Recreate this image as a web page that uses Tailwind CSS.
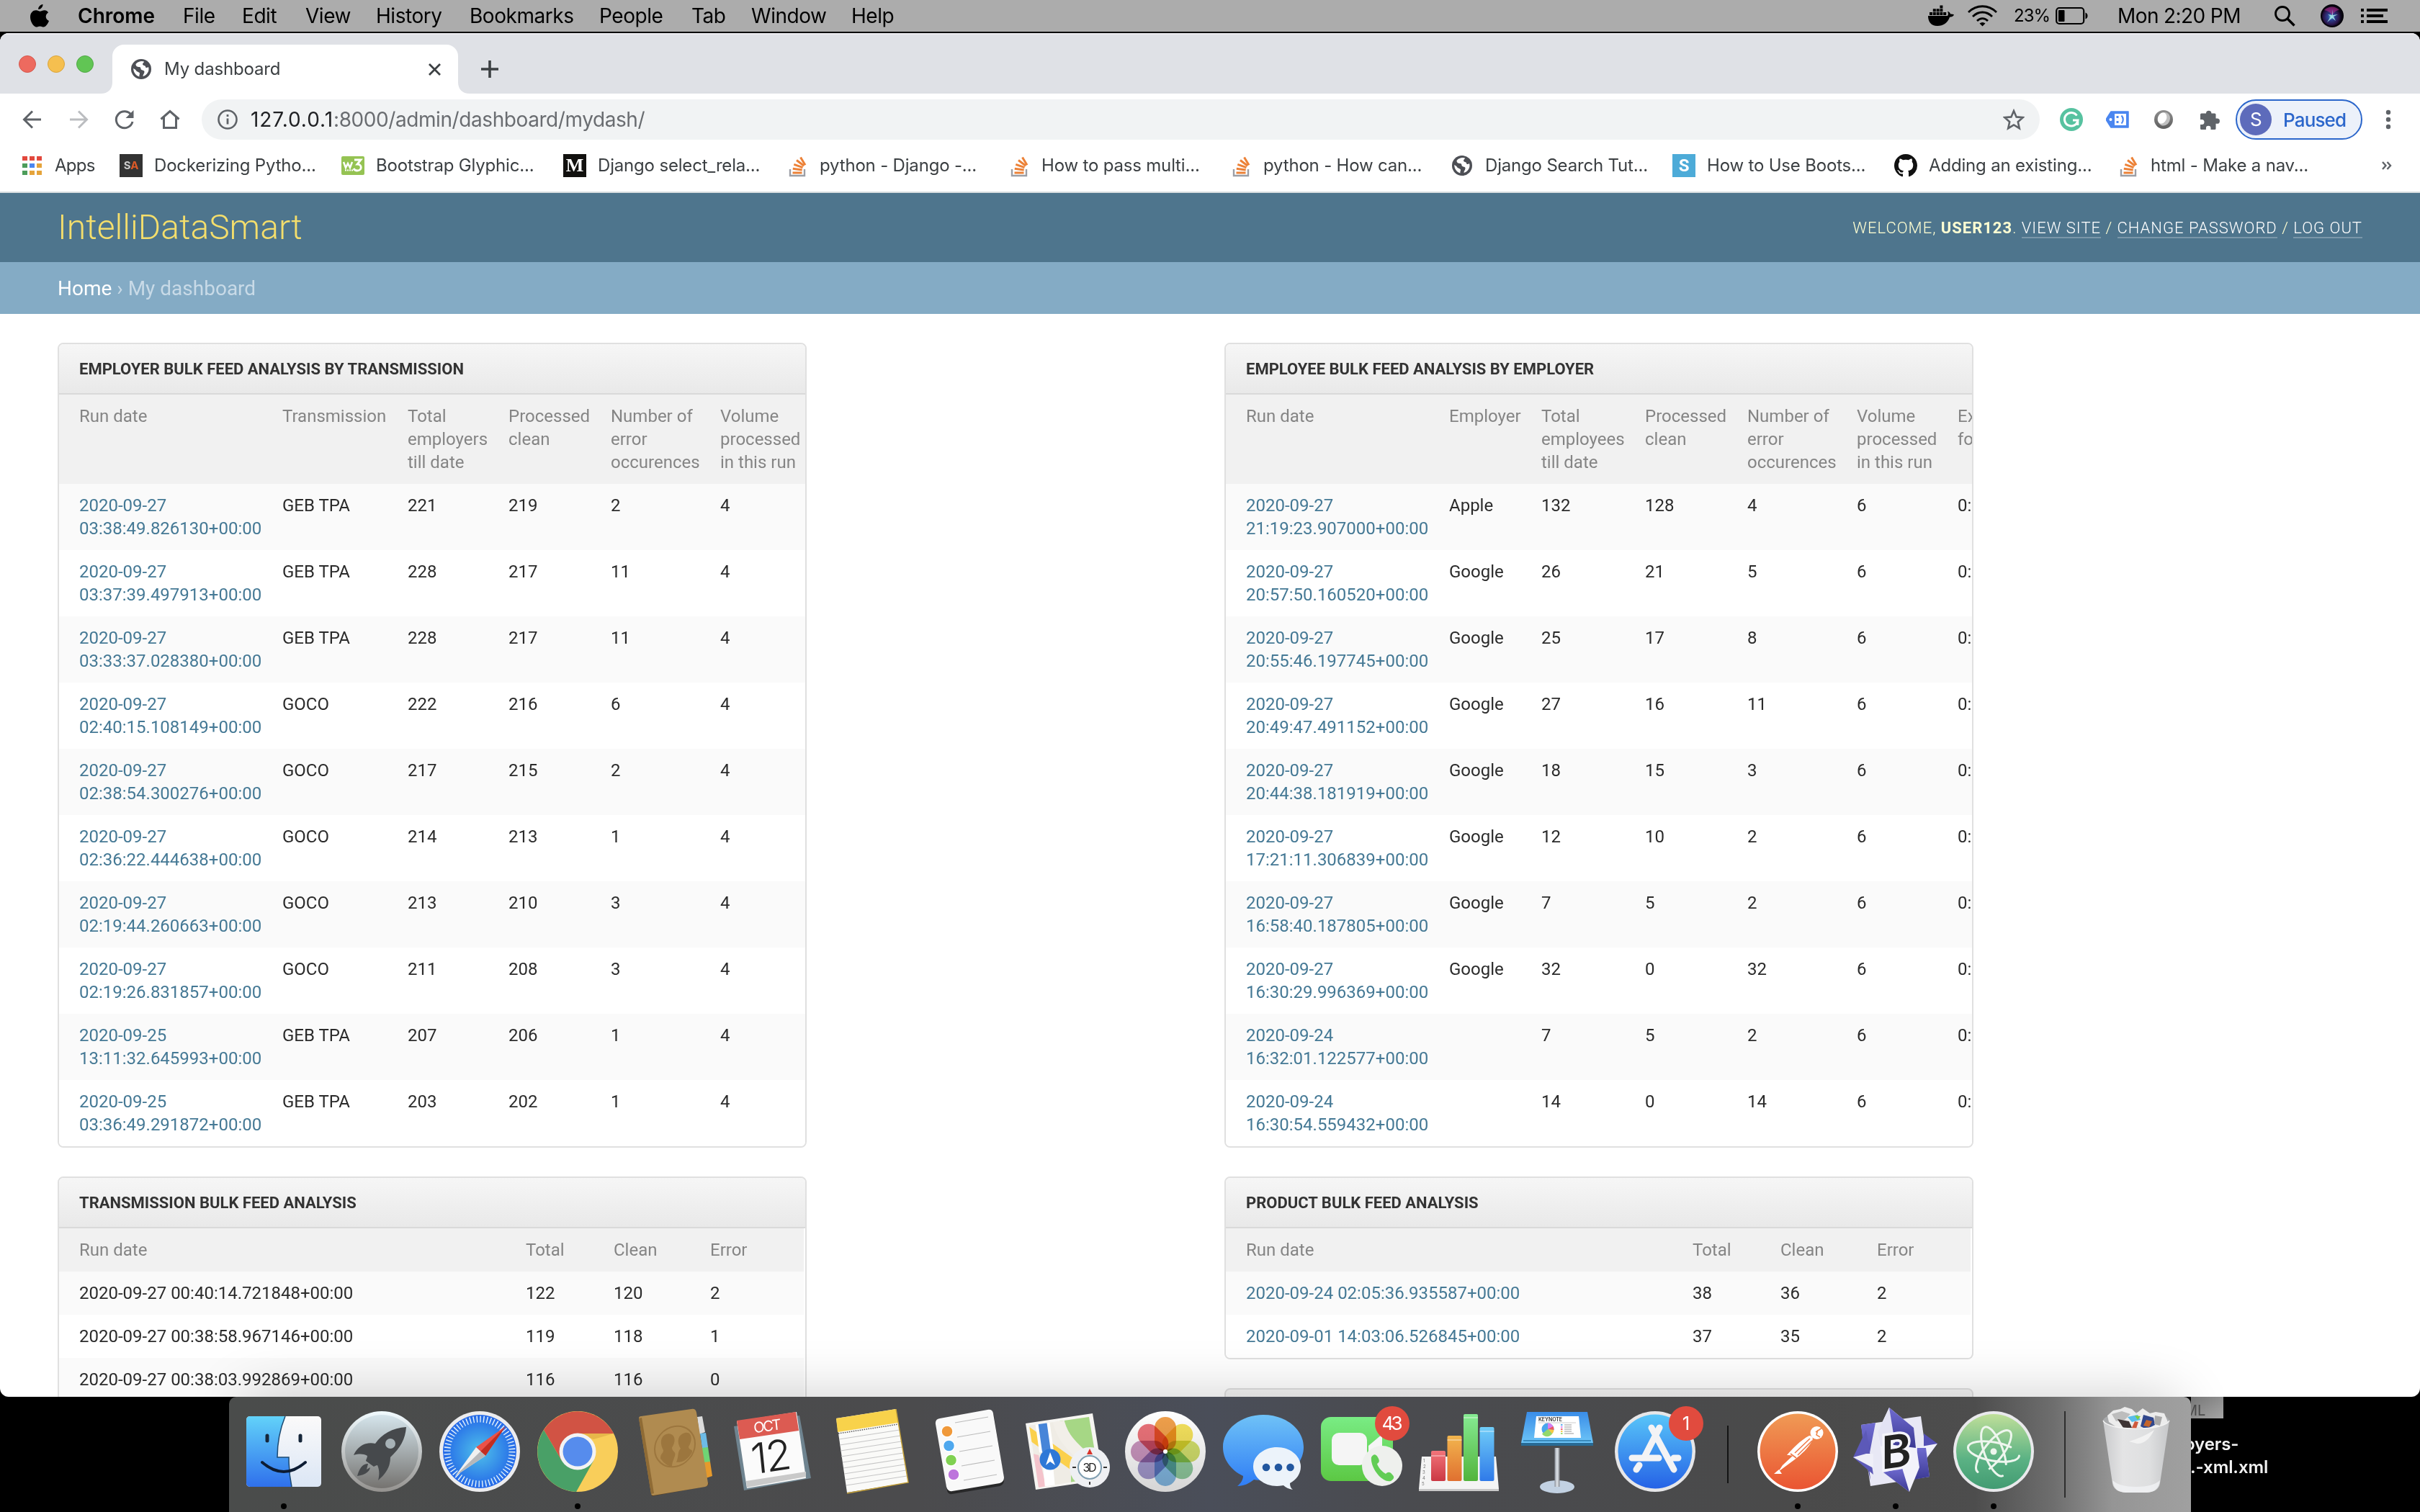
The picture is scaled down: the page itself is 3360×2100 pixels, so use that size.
<!DOCTYPE html>
<html lang="en">
<head>
<meta charset="utf-8">
<title>My dashboard</title>
<script src="https://cdn.jsdelivr.net/npm/@tailwindcss/browser@4"></script>
</head>
<body class="relative w-[3360px] h-[2100px] overflow-hidden bg-black font-['Inter',sans-serif]">

<!-- shared symbols -->
<svg width="0" height="0" class="absolute">
  <defs>
    <symbol id="globe" viewBox="0 0 28 28"><circle cx="14" cy="14" r="14" fill="#4d4f55"/><path d="M15 3c-3 0-6 1-8.500 4 0 3 2 4 5 4 3 .5 1 3 3 4 2 1 4 .5 4 3 0 2-2 3-2 6 4-1 8-5 8-10 0-1-.2-2-.5-3-2 2-4 1-4-.5 0-2-4-1-4-3.500 0-1.500 2-2 2-3.500zM3.200 13c0 5 3 10 8.300 11.600-.5-2 .5-3 .5-4.600 0-2-4-2-5-4-.6-1.300-2-2-3.800-3z" fill="#fff"/></symbol>
    <symbol id="so" viewBox="0 0 32 32"><path d="M7 21v9h20v-9" fill="none" stroke="#9c9fa6" stroke-width="2.400"/><g stroke="#ec8137" stroke-width="3"><path d="M10.500 26h13"/><path d="M10.800 20.300l12.900 1.700"/><path d="M12.300 14.300l12.200 4.300"/><path d="M16 8.500l10.200 7.800"/><path d="M21.500 4.500l6.500 10.800"/></g></symbol>
  </defs>
</svg>

<!-- menu bar -->
<header class="flex items-center h-[44px] bg-[#acacac] text-[28px] leading-[44px] text-black tracking-[-0.45px] whitespace-nowrap">
  <svg class="ml-[42px] mr-[39px] shrink-0" width="26" height="32" viewBox="0 0 26 32"><path d="M17.500 0c.3 3.500-3 7.200-6.300 7C10.800 3.700 14 .4 17.500 0zM25 11.500c-5 3-4 9.500 1 11.500-1.200 3.500-4.500 8.600-7.500 8.600-2 0-2.800-1.200-5-1.200-2.300 0-3.200 1.200-5 1.200C5 31.600 0 24.500 0 17.800 0 11.500 4 8.300 8 8.300c2.500 0 4 1.500 5.700 1.500 1.500 0 3.500-1.700 6.300-1.600 1.800 0 4 1 5 3.300z"/></svg>
  <span class="w-[147px] pl-px font-semibold tracking-normal">Chrome</span>
  <span class="w-[82px]">File</span>
  <span class="w-[88px]">Edit</span>
  <span class="w-[98px]">View</span>
  <span class="w-[130px]">History</span>
  <span class="w-[180px]">Bookmarks</span>
  <span class="w-[128px]">People</span>
  <span class="w-[83px]">Tab</span>
  <span class="w-[139px]">Window</span>
  <span>Help</span>
  <svg class="ml-auto shrink-0" width="36" height="30" viewBox="0 0 36 30"><path d="M0 15h27c1-1 1.500-4 0-6 2 0 3.500 1.500 4 3.500 2 0 4 .3 5 1-1 2.500-3.500 3.200-6 3.200C27 25 21 29 13 29 4 29 0 23 0 15z"/><path d="M2 10h4v4H2zM6.800 10h4v4h-4zM11.600 10h4v4h-4zM16.400 10h4v4h-4zM21.200 10h4v4h-4zM6.800 5.300h4v4h-4zM11.600 5.300h4v4h-4zM16.400 5.300h4v4h-4zM16.400 .5h4v4h-4z"/></svg>
  <svg class="ml-[19px] shrink-0" width="41" height="30" viewBox="0 0 41 30" fill="none" stroke="#000" stroke-width="2.800"><path d="M1 10c11-11 28-11 39 0"/><path d="M7 16c8-8 19-8 27 0"/><path d="M13 22c4.500-4.500 10.500-4.500 15 0"/><path d="M16.500 25.500c2.500-2 5.500-2 8 0l-4 4z" fill="#000" stroke="none"/></svg>
  <span class="ml-[23px] w-[50px] text-[24px] tracking-[-1px]">23%</span>
  <svg class="ml-[8px] shrink-0" width="45" height="26" viewBox="0 0 45 26"><rect x="1.200" y="2" width="38" height="22" rx="4" fill="none" stroke="#000" stroke-width="2.200"/><rect x="4" y="5" width="8.500" height="16" rx="1"/><path d="M41.500 8.500c4 1.500 4 7.500 0 9z"/></svg>
  <span class="ml-[40px] w-[174px] pl-px tracking-[-0.6px]">Mon 2:20 PM</span>
  <svg class="ml-[45px] shrink-0" width="29" height="30" viewBox="0 0 29 30" fill="none" stroke="#000" stroke-width="2.800"><circle cx="11" cy="12" r="9.500"/><path d="M18 19l9.500 9.500" stroke-width="3.400"/></svg>
  <svg class="ml-[35px] shrink-0" width="32" height="32" viewBox="0 0 32 32"><defs><radialGradient id="siri" cx=".45" cy=".55"><stop offset="0" stop-color="#6fd0dc"/><stop offset=".3" stop-color="#2c4496"/><stop offset=".75" stop-color="#2c1850"/><stop offset="1" stop-color="#0a0616"/></radialGradient></defs><circle cx="16" cy="16" r="16" fill="#05030a"/><circle cx="16" cy="16" r="14" fill="url(#siri)"/><path d="M5 8c6-6 16-6 21 0-5 0-8 4-10 8-2-5-6-7-11-8z" fill="#b02c8c" opacity=".6"/><path d="M17 7l0 8 7-1-6 3 3 6-5-4-7 6 5-8-4-3 6 1z" fill="#a9e8ea" opacity=".85"/></svg>
  <svg class="ml-[24px] mr-[45px] shrink-0" width="37" height="22" viewBox="0 0 37 22"><path d="M0 1h4v4H0zM0 9h4v4H0zM0 17h4v4H0zM8 1h29v4H8zM8 9h23v4H8zM8 17h29v4H8z"/></svg>
</header>

<!-- browser window -->
<div class="relative mt-[2px] h-[1894px] w-full rounded-[12px] overflow-hidden bg-white flex flex-col">

  <!-- tab strip -->
  <div class="h-[84px] shrink-0 bg-[#dfe1e6] border-t-2 border-[#ececf0] flex items-end">
    <div class="flex gap-[16px] ml-[26px] mb-[29px]">
      <div class="size-[24px] rounded-full bg-[#ed6a5f] border border-[#d5564c]"></div>
      <div class="size-[24px] rounded-full bg-[#f5bf4f] border border-[#d9a43c]"></div>
      <div class="size-[24px] rounded-full bg-[#61c554] border border-[#50a945]"></div>
    </div>
    <svg class="ml-[10px] shrink-0" width="16" height="16" viewBox="0 0 16 16"><path d="M16 0v16H0C10 16 16 10 16 0z" fill="#fff"/></svg>
    <div class="w-[480px] h-[68px] bg-white rounded-t-[16px] flex items-center pl-[26px] pr-[24px] text-[24px] text-[#3c4043] tracking-[-0.15px]">
      <svg width="28" height="28"><use href="#globe"/></svg>
      <span class="ml-[18px]">My dashboard</span>
      <svg class="ml-auto" width="17" height="17" viewBox="0 0 17 17" stroke="#3c4043" stroke-width="2.800"><path d="M1 1l15 15M16 1L1 16"/></svg>
    </div>
    <svg class="shrink-0" width="16" height="16" viewBox="0 0 16 16"><path d="M0 0v16h16C6 16 0 10 0 0z" fill="#fff"/></svg>
    <svg class="ml-[16px] mb-[22px]" width="24" height="24" viewBox="0 0 24 24" stroke="#3c4043" stroke-width="3.600"><path d="M12 0v24M0 12h24"/></svg>
  </div>

  <!-- toolbar -->
  <div class="h-[72px] shrink-0 flex items-center text-[#5f6368]">
    <svg class="ml-[31px]" width="27" height="26" viewBox="0 0 27 26" fill="none" stroke="#5f6368" stroke-width="3"><path d="M26 13H3M14 1.500L2.500 13 14 24.500"/></svg>
    <svg class="ml-[38px]" width="27" height="26" viewBox="0 0 27 26" fill="none" stroke="#bbbdc0" stroke-width="3"><path d="M1 13h23M13 1.500L24.500 13 13 24.500"/></svg>
    <svg class="ml-[36px]" width="28" height="28" viewBox="0 0 28 28" fill="none" stroke="#5f6368" stroke-width="3"><path d="M23.500 8A11.500 11.500 0 1 0 25 17"/><path d="M26.500 1v11h-11z" fill="#5f6368" stroke="none"/></svg>
    <svg class="ml-[35px]" width="28" height="28" viewBox="0 0 28 28" fill="none" stroke="#5f6368" stroke-width="3"><path d="M1.500 13.500L14 2.500l12.500 11M5.500 11v14.500h17V11"/></svg>
    <div class="ml-[30px] w-[2552px] h-[56px] rounded-full bg-[#f1f3f4] flex items-center pl-[22px] pr-[21px] text-[28px] whitespace-nowrap">
      <svg width="28" height="28" viewBox="0 0 28 28" fill="none" stroke="#5f6368" stroke-width="2.600"><circle cx="14" cy="14" r="12.500"/><path d="M14 12.500v8M14 7v3" stroke-width="2.800"/></svg>
      <span class="ml-[18px] tracking-[0.95px] text-[#202124]">127.0.0.1</span><span class="tracking-[-0.42px] text-[#6a6d71]">:8000/admin/dashboard/mydash/</span>
      <svg class="ml-auto" width="30" height="30" viewBox="0 0 30 30" fill="none" stroke="#5f6368" stroke-width="2.600"><path d="M15 3l3.600 8.400 9 .8-6.800 6 2 9L15 22.500 7.200 27.200l2-9-6.800-6 9-.8z"/></svg>
    </div>
    <svg class="ml-[28px]" width="32" height="32" viewBox="0 0 32 32"><circle cx="16" cy="16" r="16" fill="#57c2a0"/><path d="M23.500 10.500A9.300 9.300 0 1 0 25 17h-7M24.800 17v7" fill="none" stroke="#fff" stroke-width="3"/></svg>
    <svg class="ml-[32px]" width="32" height="24" viewBox="0 0 32 24"><path d="M0 12L7 1h24v22H7z" fill="#4a86f0" stroke="#4a86f0" stroke-width="1.500" stroke-linejoin="round"/><rect x="12" y="4" width="16" height="16" fill="#fff"/><circle cx="6.500" cy="12" r="2" fill="#fff"/><path d="M14.500 7h3v3h-3zM14.500 14h3v3h-3z" fill="#4a86f0"/><path d="M21.500 6.500c3 3 3 8 0 11" stroke="#4a86f0" stroke-width="2.200" fill="none"/></svg>
    <svg class="ml-[34px]" width="28" height="28" viewBox="0 0 28 28"><defs><linearGradient id="ring" x2="0" y2="1"><stop stop-color="#8f8f8f"/><stop offset="1" stop-color="#5e5e5e"/></linearGradient></defs><circle cx="14" cy="14" r="13" fill="url(#ring)"/><ellipse cx="14.500" cy="13.500" rx="8" ry="9.500" fill="#c0c0c0" transform="rotate(25 15 14)"/><ellipse cx="12" cy="12" rx="6" ry="8" fill="#fff" transform="rotate(25 12 12)"/></svg>
    <svg class="ml-[35px]" width="30" height="30" viewBox="0 0 30 30"><path d="M10 6.500a3.700 3.700 0 0 1 7.400 0H22a1.500 1.500 0 0 1 1.500 1.500v5.500h1.800a3.600 3.600 0 0 1 0 7.300h-1.800v6.700A1.500 1.500 0 0 1 22 29h-5.500v-2a3.300 3.300 0 0 0-6.600 0v2H3.500A1.500 1.500 0 0 1 2 27.500v-5.500h2a3.500 3.500 0 0 0 0-7H2V8a1.500 1.500 0 0 1 1.500-1.500z" fill="#5f6368"/></svg>
    <div class="ml-[21px] w-[176px] h-[56px] rounded-full border-[2.500px] border-[#2b66cb] bg-[#ecf1fa] flex items-center pl-[4px] text-[26px] font-medium text-[#2b66cb] tracking-[-0.85px]">
      <span class="size-[44px] rounded-full bg-[#5d6bbb] text-white text-center text-[26px] leading-[44px] font-normal">S</span>
      <span class="ml-[16px]">Paused</span>
    </div>
    <svg class="ml-[32px]" width="8" height="28" viewBox="0 0 8 28" fill="#5f6368"><circle cx="4" cy="4" r="3.200"/><circle cx="4" cy="14" r="3.200"/><circle cx="4" cy="24" r="3.200"/></svg>
  </div>

  <!-- bookmarks bar -->
  <div class="h-[66px] shrink-0 border-b-2 border-[#d8dde0] flex items-center pb-[10px] pt-[2px] text-[24px] text-[#3c4043] tracking-[-0.18px] whitespace-nowrap">
    <div class="w-[166px] shrink-0 pl-[31px] flex items-center">
      <svg width="27" height="26" viewBox="0 0 27 26"><path d="M0 0h7v6H0zM10 0h7v6h-7zM20 0h7v6h-7z" fill="#e2483d"/><path d="M0 10h7v6H0zM0 20h7v6H0z" fill="#4d9d5b"/><path d="M10 10h7v6h-7z" fill="#4a86f0"/><path d="M20 10h7v6h-7zM10 20h7v6h-7zM20 20h7v6h-7z" fill="#e5a43b"/></svg>
      <span class="ml-[18px] tracking-[-0.7px]">Apps</span>
    </div>
    <div class="w-[308px] shrink-0 flex items-center gap-[16px]"><span class="size-[32px] bg-[#333] text-[15px] leading-[32px] text-center font-bold text-[#ccc]">S<span class="text-[#dc5a28]">A</span></span>Dockerizing Pytho...</div>
    <div class="w-[308px] shrink-0 flex items-center gap-[16px]">
      <svg width="32" height="28" viewBox="0 0 32 28"><rect width="32" height="26" y="1" rx="2" fill="#95c353"/><path d="M3 9l3 8 3-6 3 6 3-8" stroke="#fff" stroke-width="2.500" fill="none"/><path d="M18 6h9l-5 6c7 0 7 9 0 9-2 0-4-1-5-3" stroke="#fff" stroke-width="2.800" fill="none"/><path d="M5 20.500h11" stroke="#fff" stroke-width="1.800" stroke-dasharray="2 1"/></svg>Bootstrap Glyphic...</div>
    <div class="w-[308px] shrink-0 flex items-center gap-[16px]"><span class="size-[32px] bg-[#12110f] text-white text-[26px] leading-[32px] text-center font-bold font-['Liberation_Serif',serif]">M</span>Django select_rela...</div>
    <div class="w-[308px] shrink-0 flex items-center gap-[16px]"><svg width="32" height="32"><use href="#so"/></svg>python - Django -...</div>
    <div class="w-[308px] shrink-0 flex items-center gap-[16px]"><svg width="32" height="32"><use href="#so"/></svg>How to pass multi...</div>
    <div class="w-[308px] shrink-0 flex items-center gap-[16px]"><svg width="32" height="32"><use href="#so"/></svg>python - How can...</div>
    <div class="w-[308px] shrink-0 flex items-center gap-[16px]"><span class="w-[32px] pl-[2px]"><svg width="28" height="28"><use href="#globe"/></svg></span>Django Search Tut...</div>
    <div class="w-[308px] shrink-0 flex items-center gap-[16px]"><span class="size-[32px] bg-[#4dabd8] text-white text-[24px] leading-[32px] text-center font-bold font-['Roboto',sans-serif]">S</span>How to Use Boots...</div>
    <div class="w-[308px] shrink-0 flex items-center gap-[16px]"><svg width="32" height="32" viewBox="0 0 16 16"><path fill="#111" d="M8 0C3.580 0 0 3.580 0 8c0 3.540 2.290 6.530 5.470 7.590.4.070.55-.17.55-.38 0-.19-.01-.82-.01-1.490-2.010.37-2.530-.49-2.690-.94-.09-.23-.48-.94-.82-1.130-.28-.15-.68-.52-.01-.53.63-.01 1.080.58 1.230.82.72 1.210 1.870.87 2.330.66.07-.52.28-.87.51-1.070-1.780-.2-3.640-.89-3.640-3.950 0-.87.31-1.590.82-2.150-.08-.2-.36-1.020.08-2.120 0 0 .67-.21 2.200.82.64-.18 1.320-.27 2-.27s1.360.09 2 .27c1.530-1.040 2.200-.82 2.200-.82.44 1.100.16 1.920.08 2.120.51.56.82 1.270.82 2.150 0 3.070-1.870 3.750-3.650 3.950.29.25.54.73.54 1.480 0 1.070-.01 1.930-.01 2.200 0 .21.15.46.55.38A8.013 8.013 0 0 0 16 8c0-4.420-3.580-8-8-8z"/></svg>Adding an existing...</div>
    <div class="w-[308px] shrink-0 flex items-center gap-[16px]"><svg width="32" height="32"><use href="#so"/></svg>html - Make a nav...</div>
    <svg class="ml-[61px] shrink-0" width="14" height="12" viewBox="0 0 14 12" fill="none" stroke="#5f6368" stroke-width="2.400"><path d="M1 1l4.500 5L1 11M7.500 1l4.500 5-4.500 5"/></svg>
  </div>

  <!-- page -->
  <div class="font-['Roboto',sans-serif] flex flex-col">
    <div class="h-[96px] bg-[#4e758d] px-[80px] flex items-center justify-between">
      <h1 class="text-[48px] font-light text-[#f4de6c]">IntelliDataSmart</h1>
      <div class="pt-px text-[22px] leading-[30px] font-light text-[#ffffd2] tracking-[1px] whitespace-nowrap">WELCOME, <b class="font-bold">USER123</b>. <a class="text-white border-b-2 border-white/25">VIEW SITE</a> / <a class="text-white border-b-2 border-white/25">CHANGE PASSWORD</a> / <a class="text-white border-b-2 border-white/25">LOG OUT</a></div>
    </div>
    <div class="h-[72px] pt-[2px] bg-[#84abc5] px-[80px] flex items-center text-[28px] text-[#c8dae7] whitespace-pre"><a class="text-white">Home</a> › My dashboard</div>

    <main class="grid grid-cols-[1040px_1040px] gap-x-[580px] px-[80px] pt-[40px] items-start text-[24px] leading-[32px] text-[#2b2b2b]">
      <div class="flex flex-col gap-[40px]" id="left"></div>
      <div class="flex flex-col gap-[40px]" id="right"></div>
    </main>
  </div>

  <!-- shade cast by the dock -->
  <div class="absolute left-[338px] top-[1894px] w-[2684px] h-[160px] shadow-[0_0_80px_0px_rgba(0,0,0,0.2)]"></div>
</div>

<!-- desktop file behind the dock -->
<div class="absolute left-[3042px] top-[1940px] w-[200px] h-[160px] overflow-hidden text-[24px] font-semibold text-[#f2f2f2]">
  <div class="w-[45px] h-[30px] bg-linear-to-br from-[#777] to-[#a5a5a5] text-[20px] leading-[38px] font-normal text-[#4a4a4a] overflow-hidden"><span class="-ml-[9px]">ML</span></div>
  <div class="mt-[20px] -ml-[9px] leading-[32px] tracking-[-0.1px]">oyers-<br><span class="ml-[8px]">.-xml.xml</span></div>
</div>

<!-- dock -->
<div class="absolute left-[318px] top-[1940px] w-[2724px] h-[160px] rounded-t-[10px] bg-[linear-gradient(90deg,#4a4c4b_0%,#4b4b4d_35%,#4a4e59_50%,#4a4b4f_60%,#4a4a4a_80%,#4d4d4d_89%,#6e6e6e_93%,#959595_96%,#a0a0a0_100%)] flex px-[8px]">

  <svg width="136" height="160" viewBox="-68 -76 136 160"><defs><linearGradient id="fn1" x2="0" y2="1"><stop stop-color="#62d2f9"/><stop offset="1" stop-color="#2f70ec"/></linearGradient><linearGradient id="fn2" x2="0" y2="1"><stop stop-color="#fbfafa"/><stop offset="1" stop-color="#dbe6f5"/></linearGradient></defs><rect x="-52" y="-49" width="104" height="98" rx="5" fill="url(#fn2)"/><path d="M2-49h-49a5 5 0 0 0-5 5v88a5 5 0 0 0 5 5H11Q7 30 7 8H-9Q-9-22 2-49z" fill="url(#fn1)"/><path d="M2-49Q-9-22-9 8H7Q7 30 11 49" fill="none" stroke="#1c4a72" stroke-width="1.500"/><path d="M-23-22v7M23-22v7" stroke="#16263a" stroke-width="5" stroke-linecap="round"/><path d="M-30 15Q0 41 30 15" fill="none" stroke="#0d1c33" stroke-width="4" stroke-linecap="round"/><circle cy="76" r="4"/></svg>

  <svg width="136" height="160" viewBox="-68 -76 136 160"><defs><linearGradient id="lp1" x2="0" y2="1"><stop stop-color="#f1fbff"/><stop offset="1" stop-color="#94928f"/></linearGradient><linearGradient id="lp2" x2="0" y2="1"><stop stop-color="#d5e5ec"/><stop offset="1" stop-color="#757370"/></linearGradient></defs><circle r="56" fill="url(#lp1)"/><circle r="51" fill="url(#lp2)"/><path d="M34-34C15-33 0-24-9-11-24-14-34-6-39 5c8-2 13-2 19 1 0 3-2 5-2 7l11 8c2-1 3-2 5-2 3 7 3 13 1 21C7 30 12 20 12 8 26-5 33-18 34-34z" fill="#46494c"/><circle cx="12" cy="-11" r="7" fill="#a7b2b7"/><path d="M-19 17c-8 0-12 7-15 17 9-1 17-5 18-12l-5 3z" fill="#46494c"/></svg>

  <svg width="136" height="160" viewBox="-68 -76 136 160"><defs><radialGradient id="sf"><stop stop-color="#4fc1ea"/><stop offset="1" stop-color="#2468e8"/></radialGradient></defs><circle r="56" fill="#ececee"/><circle r="51" fill="url(#sf)"/><circle r="45" fill="none" stroke="#e6f3fb" stroke-width="9" stroke-dasharray="1.400 3.312"/><path d="M36-35L-5-6 8 6z" fill="#ea5248"/><path d="M36-35L1 0 8 6z" fill="#c22e22"/><path d="M-34 34L-5-6 8 6z" fill="#f0f0f0"/><path d="M-34 34L1 0 8 6z" fill="#b5b7ba"/></svg>

  <svg width="136" height="160" viewBox="-68 -76 136 160"><circle r="56" fill="#f9ce5a"/><path d="M-47-30A56 56 0 0 1 50-25H0L-22 13z" fill="#d15344"/><path d="M-47-30A56 56 0 0 0-2 56L22 13H-22z" fill="#49a067"/><path d="M0-25h50L22-17z" fill="#dba93f" opacity=".6"/><circle r="25.500" fill="#f3f3f3"/><circle r="20.500" fill="#568ced"/><circle cy="76" r="4"/></svg>

  <svg width="136" height="160" viewBox="-68 -76 136 160"><path d="M30-48l7-1 4 22-8 3z" fill="#dcdcdc"/><path d="M34-25l8-1 3 20-8 3z" fill="#6dbbe6"/><path d="M36-5l9-1 3 20-9 3z" fill="#6fd474"/><path d="M39 15l9-1 3 20-9 3z" fill="#e69a2c"/><path d="M-33 59l74-12 6-4-3 5-77 14z" fill="#5d3f19"/><path d="M-51-46q0-3 3-3l70-10q6-1 7 5l16 98q0 4-4 5l-72 12q-3 0-3-3z" fill="#b08b50"/><path d="M-51-46l4-1 17 105-4 1z" fill="#8f6b35"/><g transform="translate(-1 -7) skewY(-8)" fill="#9c763e"><ellipse rx="28" ry="28" fill="none" stroke="#9c763e" stroke-width="2"/><path d="M-20 14c0-8 4-6 4-11-6-12-3-22 6-22s13 10 6 20c0 6 6 6 4 12s-4 9-4 14q-8-1-16-13z"/><path d="M2 22c4-8 1-14 6-18-6-10-4-20 6-21s11 12 5 20c0 5 6 4 5 8q-8 14-22 11z"/></g></svg>

  <svg width="136" height="160" viewBox="-68 -76 136 160"><path d="M-55-35L36-50l16 87-93 17z" fill="#6f8490"/><path d="M-51-42l83-13 13 92-82 14z" fill="#fbfbfb"/><path d="M-38 41l83-13v7l-82 15z" fill="#c9c9c9"/><path d="M-51-43l82-12 4 26-82 12z" fill="#dc5b52"/><g transform="matrix(1 -.15 .1 1 0 0)" text-anchor="middle" font-family="Inter"><text x="-5" y="-29" font-size="20" fill="#fff" textLength="38">OCT</text><text x="-4" y="27" font-size="58" font-weight="300" fill="#222" textLength="56">12</text></g></svg>

  <svg width="136" height="160" viewBox="-68 -76 136 160"><path d="M-49-46l83-13 17 102-85 14z" fill="#fafaf8"/><path d="M-49-46l83-13 3 19-84 13z" fill="#f8d24b"/><path d="M-46-25l84-13" stroke="#555" stroke-width="1.500" stroke-dasharray="1.500 1.500"/><g stroke="#c6c6c6" stroke-width="1.200"><path d="M-45-17l84-13M-44-9l84-13M-43-1l84-13M-42 7l84-13M-40 15l84-13M-39 23l84-13M-38 31l84-13M-36 39l84-13M-35 47l84-13"/></g><path d="M34-59l17 102-85 15" fill="none" stroke="#c6a23a" stroke-width="1.500"/></svg>

  <svg width="136" height="160" viewBox="-68 -76 136 160"><path d="M-46-36q-1-7 6-8l66-11q7-1 8 5l14 90q0 6-6 8l-66 11q-6 1-7-5z" fill="#1c1c1c" opacity=".75"/><path d="M-47-38q-1-7 6-8l66-12q7-1 8 5l15 89q0 6-6 8l-66 11q-6 1-8-6z" fill="#f9f9f9"/><g stroke="#fff" stroke-width="1.500"><circle cx="-31" cy="-28" r="8" fill="#f0993a"/><circle cx="-28.500" cy="-8" r="8" fill="#4fa8ee"/><circle cx="-25.500" cy="12" r="8" fill="#80d152"/><circle cx="-22" cy="32" r="8" fill="#bd74dc"/></g><g stroke="#bbb" stroke-width="1.200"><path d="M-20-40l46-8M-17-20l46-8M-14 0l46-8M-11 20l46-8M-8 40l46-8"/></g></svg>

  <svg width="136" height="160" viewBox="-68 -76 136 160"><defs><clipPath id="mp"><path d="M-53-36l83-12 14 84-84 14z"/></clipPath></defs><path d="M-58-39l93-14 15 92-94 14z" fill="#f6f5f2"/><g clip-path="url(#mp)"><path d="M-60-60H60V60H-60z" fill="#efece5"/><path d="M-20-60h80v60L20 20z" fill="#a6d785"/><path d="M-15-60C-12-10 20 0 40 25" stroke="#f2efe9" stroke-width="16" fill="none"/><path d="M-60-30L10 20 60 60" stroke="#fbd04c" stroke-width="15" fill="none"/><path d="M-60 0l20 5 12 50h-25z" fill="#f4c3cb"/><path d="M-36-50l7 50" stroke="#fff" stroke-width="20"/><path d="M-36-50l7 50" stroke="#4785d8" stroke-width="12"/><path d="M-28 10l5 50" stroke="#fff" stroke-width="14"/><path d="M5 20v40h40z" fill="#a6d785"/></g><circle cx="-24" cy="11" r="14.500" fill="#2f78d7"/><path d="M-24 1l7 18-7-5-6 5z" fill="#fff"/><circle cx="31" cy="22" r="28" fill="#eff0f3"/><circle cx="31" cy="22" r="16" fill="#fff" stroke="#7e9db0" stroke-width="2"/><path d="M31-4l4 8h-8z" fill="#d9342b"/><path d="M7 22h5M50 22h5M31 42v4" stroke="#333" stroke-width="2"/><text x="31" y="28" font-size="16" font-family="Inter" text-anchor="middle" textLength="19" fill="#222">3D</text></svg>

  <svg width="136" height="160" viewBox="-68 -76 136 160"><defs><linearGradient id="ph" x2="0" y2="1"><stop stop-color="#fff"/><stop offset="1" stop-color="#d5d5d5"/></linearGradient></defs><circle r="56" fill="url(#ph)"/><g class="mix-blend-multiply"><rect x="-15" y="-48" width="30" height="48" rx="15" fill="#f0a04b"/><rect x="-15" y="-48" width="30" height="48" rx="15" fill="#f3de4a" opacity=".9" class="mix-blend-multiply" transform="rotate(45)"/><rect x="-15" y="-48" width="30" height="48" rx="15" fill="#cddc5c" opacity=".9" class="mix-blend-multiply" transform="rotate(90)"/><rect x="-15" y="-48" width="30" height="48" rx="15" fill="#85c795" opacity=".9" class="mix-blend-multiply" transform="rotate(135)"/><rect x="-15" y="-48" width="30" height="48" rx="15" fill="#76b3e2" opacity=".9" class="mix-blend-multiply" transform="rotate(180)"/><rect x="-15" y="-48" width="30" height="48" rx="15" fill="#9a8fca" opacity=".9" class="mix-blend-multiply" transform="rotate(225)"/><rect x="-15" y="-48" width="30" height="48" rx="15" fill="#c58bb8" opacity=".9" class="mix-blend-multiply" transform="rotate(270)"/><rect x="-15" y="-48" width="30" height="48" rx="15" fill="#e8636a" opacity=".9" class="mix-blend-multiply" transform="rotate(315)"/></g><circle r="3" fill="#fff"/></svg>

  <svg width="136" height="160" viewBox="-68 -76 136 160"><defs><linearGradient id="ms" x2="0" y2="1"><stop stop-color="#6fc2f7"/><stop offset="1" stop-color="#2f7df5"/></linearGradient></defs><path d="M0-51c31 0 56 20 56 45S31 40 0 40c-4 0-9-.4-13-1-6 5-14 9-23 9 5-4 8-9 8-14C-45 26-56 11-56-6c0-25 25-45 56-45z" fill="url(#ms)"/><path d="M19-6c18 0 33 12 33 27 0 10-6 18-15 23 0 4 1 7 4 9-6-1-10-3-13-6-3 .6-6 1-9 1-18 0-33-12-33-27S1-6 19-6z" fill="#ecf3fa"/><g fill="#22579f"><circle cx="4" cy="22" r="5.300"/><circle cx="21" cy="22" r="5.300"/><circle cx="37.500" cy="22" r="5.300"/></g></svg>

  <svg width="136" height="160" viewBox="-68 -76 136 160"><defs><linearGradient id="ft" x2="0" y2="1"><stop stop-color="#79ec84"/><stop offset="1" stop-color="#5cc844"/></linearGradient></defs><rect x="-56" y="-48" width="100" height="89" rx="14" fill="url(#ft)"/><rect x="-41" y="-26" width="49" height="45" rx="10" fill="#f5f5f5"/><path d="M10-8L29-24v36L10 4z" fill="#f5f5f5"/><circle cx="29" cy="20" r="28" fill="#eef0ed"/><path d="M14 8c3-5 6-5 9 0s2 7-1 9c2 6 7 11 12 14 3-3 6-3 9 1 4 4 2 6-2 9C29 44 12 22 14 8z" fill="#62cd55"/><circle cx="43" cy="-39" r="24" fill="#e14b3e"/><text x="43" y="-30" font-size="26" font-family="Inter" text-anchor="middle" textLength="29" fill="#fff">43</text></svg>

  <svg width="136" height="160" viewBox="-68 -76 136 160"><path d="M-52 7H51l4 45H-56z" fill="#f4f4f4"/><path d="M-56 52H55v3H-56z" fill="#c8c8c8"/><g font-size="6" font-family="Inter" fill="#777"><text x="-50" y="15">1</text><text x="-50" y="23">2</text><text x="-51" y="31">3</text><text x="-51" y="39">4</text><text x="-52" y="47">5</text></g><defs><linearGradient id="n1" x2="0" y2="1"><stop stop-color="#f2747a"/><stop offset="1" stop-color="#cb3843"/></linearGradient><linearGradient id="n2" x2="0" y2="1"><stop stop-color="#f2b54e"/><stop offset="1" stop-color="#e07030"/></linearGradient><linearGradient id="n3" x2="0" y2="1"><stop stop-color="#86eb93"/><stop offset="1" stop-color="#52b43c"/></linearGradient><linearGradient id="n4" x2="0" y2="1"><stop stop-color="#70cdf8"/><stop offset="1" stop-color="#2f7ae9"/></linearGradient></defs><rect x="-39" y="-1" width="20" height="42" rx="2" fill="url(#n1)"/><rect x="-16.500" y="-22" width="20" height="63" rx="2" fill="url(#n2)"/><rect x="6" y="-52" width="20" height="93" rx="2" fill="url(#n3)"/><rect x="28.500" y="-34" width="20" height="75" rx="2" fill="url(#n4)"/><path d="M-39 6h20M-16.500-16h20M6-47h20M28.500-28h20" stroke="#fff" stroke-opacity=".35" stroke-width="2"/></svg>

  <svg width="136" height="160" viewBox="-68 -76 136 160"><defs><linearGradient id="kn" x2="0" y2="1"><stop stop-color="#3a8de8"/><stop offset="1" stop-color="#6cc4f7"/></linearGradient><linearGradient id="kp"><stop stop-color="#8a8f98"/><stop offset=".5" stop-color="#e3e8ee"/><stop offset="1" stop-color="#85888e"/></linearGradient></defs><ellipse cy="49" rx="24" ry="9" fill="#c2d1e2"/><rect x="-3.500" y="-5" width="7" height="54" fill="url(#kp)"/><path d="M-42-55h84l8 43H-50z" fill="url(#kn)"/><path d="M-50-12H50v4H-50z" fill="#286a94"/><path d="M-47-15h94" stroke="#2a78a8" stroke-width="1.500"/><path d="M-29-49h59l3 30h-65z" fill="#fff"/><text x="-26" y="-42" font-size="7" font-weight="600" font-family="Inter" textLength="33" fill="#333">KEYNOTE</text><path d="M-26-40H26" stroke="#ccc" stroke-width="1"/><circle cx="-13" cy="-31" r="8.500" fill="#4ba6ec"/><path d="M-13-31v-8.500a8.500 8.500 0 0 1 7.500 5z" fill="#d77df0"/><path d="M-13-31l7.500-4a8.500 8.500 0 0 1 1 5z" fill="#ee5561"/><path d="M-13-31l8.500 1a8.500 8.500 0 0 1-2.500 5.500z" fill="#f6c944"/><path d="M-13-31l6 6.500a8.500 8.500 0 0 1-14 0z" fill="#93d86c"/><g stroke-width="1.800"><path d="M5-37h2.500" stroke="#4ba6ec"/><path d="M5-34h2.500" stroke="#d77df0"/><path d="M5-31h2.500" stroke="#ee5561"/><path d="M5-28h2.500" stroke="#f6c944"/><path d="M5-25h2.500" stroke="#93d86c"/></g><path d="M10-37h10M10-34h10M10-31h10M10-28h10M10-25h13" stroke="#bbb" stroke-width="1.300"/></svg>

  <svg width="136" height="160" viewBox="-68 -76 136 160"><defs><linearGradient id="as" x2="0" y2="1"><stop stop-color="#58c5f9"/><stop offset="1" stop-color="#2562e6"/></linearGradient></defs><circle r="56" fill="#e6e6e8"/><circle r="51.500" fill="url(#as)"/><g stroke="#f3f3f5" stroke-width="9" stroke-linecap="round" fill="none"><path d="M6-33L-15 8M-5-33L26 25M-32 9H5M26 9h6M-22 19l-4 6"/></g><circle cx="43" cy="-39" r="24" fill="#e14b3e"/><text x="43" y="-30" font-size="26" font-family="Inter" text-anchor="middle" fill="#fff">1</text></svg>

  <div class="w-[62px] pl-[32px] pt-[40px]"><div class="w-[2px] h-[80px] bg-[#141414]"></div></div>

  <svg width="136" height="160" viewBox="-68 -76 136 160"><defs><linearGradient id="pm" x2="0" y2="1"><stop stop-color="#f09a55"/><stop offset="1" stop-color="#ea5532"/></linearGradient></defs><circle r="56" fill="#fff"/><circle r="52.500" fill="url(#pm)"/><circle cx="26.500" cy="-26" r="9" fill="#fff"/><path d="M25-27l9-6M28-30l-2 7 5 3" stroke="#ee8a50" stroke-width="1.600" fill="none"/><path d="M16-22c4 0 6 3 4 7C15-5 5 4-4 11l-23 17 6-9L-7 6c-2-1-5-1-8-1C-8-3 4-16 16-22z" fill="#fff"/><path d="M17-18L-4 2M20-15L0 5M-10 3l8 6" stroke="#ee7a4a" stroke-width="1.600"/><path d="M-33 31l7-6 4 6z" fill="#fff"/><circle cy="76" r="4"/></svg>

  <svg width="136" height="160" viewBox="-68 -76 136 160"><defs><linearGradient id="bb" x2="0" y2="1"><stop stop-color="#6f6bd0"/><stop offset="1" stop-color="#3c3a94"/></linearGradient></defs><path d="M-48-37L35-49l12 84-82 13z" fill="#e8e8f5"/><path d="M-48-37l20-3-10 52 3 28-9-40z" fill="url(#bb)"/><path d="M-59 8l18-38 10 62z" fill="#5c59b8"/><path d="M-59 8l18-5h10v20z" fill="#efeff8"/><path d="M58-11L39-25v40z" fill="#5450b4"/><path d="M58-11L30-6l6 25z" fill="#f1f1fa"/><path d="M30-5h12l5 40-22 4z" fill="url(#bb)"/><path d="M-9-61l34 28 8 55-14 34-34-26-10-57z" fill="#f2f2fa"/><path d="M-9-61l34 28 3 28-37-5z" fill="url(#bb)"/><path d="M19 56L-17 29l26-6z" fill="url(#bb)"/><path d="M-9-61l-16 34 4 20 20-5z" fill="#e3e3f4"/><g transform="translate(1 22) skewY(-8)"><text font-size="63" font-weight="600" font-family="Inter" text-anchor="middle" stroke="#f4f4fb" stroke-width="7" paint-order="stroke" fill="#222">B</text></g><circle cy="76" r="4"/></svg>

  <svg width="136" height="160" viewBox="-68 -76 136 160"><defs><linearGradient id="at" x2="0" y2="1"><stop stop-color="#bfdf99"/><stop offset=".6" stop-color="#5bb284"/><stop offset="1" stop-color="#429b72"/></linearGradient></defs><circle r="56" fill="#e9e9ec"/><circle r="52" fill="url(#at)"/><g fill="none" stroke="#eef6ee" stroke-width="3" stroke-linecap="round"><ellipse rx="36" ry="13" transform="rotate(10)" stroke-dasharray="144 18"/><ellipse rx="36" ry="13" transform="rotate(70)" stroke-dasharray="144 18"/><ellipse rx="36" ry="13" transform="rotate(128)" stroke-dasharray="144 18"/></g><circle r="4.500" fill="#eef6ee"/><circle cy="76" r="4"/></svg>

  <div class="w-[62px] pl-[30px] pt-[20px]"><div class="w-[2px] h-[120px] bg-[#2e2e2e]"></div></div>

  <svg width="136" height="160" viewBox="-68 -76 136 160"><defs><linearGradient id="tr"><stop stop-color="#c9cacc"/><stop offset=".3" stop-color="#e4e4e5"/><stop offset=".7" stop-color="#dedfe0"/><stop offset="1" stop-color="#c6c7c9"/></linearGradient></defs><ellipse cy="-43" rx="46" ry="12" fill="#a9abad"/><path d="M-40-50l8-7 10-2 6-3 10 3 6 6 9-7 10 7 8-2 12 2 5 12-10 8H-26l-12-8z" fill="#ececec"/><path d="M-34-52l14-4 12 4-8 8-12 2z" fill="#bdbdbd"/><path d="M-12-48l14-3 4 7-12 3z" fill="#59bdea"/><path d="M-2-50l8 1-4 5z" fill="#7fce3c"/><path d="M10-51l14 4 2 10-12 6-8-4z" fill="#31478c"/><path d="M14-44l8 2-4 8-8-2z" fill="#c4652c"/><path d="M-26-45l16 3 4 9h-12z" fill="#3e3434"/><path d="M-2-42l5 1-4 12-6-2z" fill="#cf5a3c"/><path d="M26-50l10 2-3 12-8-2z" fill="#a9a9a9"/><path d="M-46-43C-40-28 40-28 46-43L33 44q-2 12-18 13h-30q-16-1-18-13z" fill="url(#tr)"/><path d="M-46-43C-40-28 40-28 46-43" fill="none" stroke="#f4f4f4" stroke-width="1.500"/><path d="M-33 40q2 16 18 17h30q16-1 18-17-10 9-33 9t-33-9z" fill="#f1f2f5" opacity=".8"/><path d="M-10-14q20-6 35-16-10 20-24 19z" fill="#f2f2f2"/></svg>
</div>

<script>
const head = t => `<h2 class="h-[70px] px-[28px] border-b-2 border-[#d9d9d9] bg-linear-to-b from-[#f6f6f6] to-[#e9e9e9] text-[22px] leading-[70px] font-bold text-[#333] whitespace-nowrap">${t}</h2>`;
const cell = (c, i, link) => `<div class="py-[14px] ${i ? 'pl-[14px]' : 'pl-[28px]'} ${link && !i ? 'text-[#457995]' : ''}">${c}</div>`;
const card = (title, cols, heads, rows, link) => `<section class="border-2 border-[#e0e0e0] rounded-[8px] overflow-hidden bg-white">${head(title)}
  <div class="overflow-hidden whitespace-nowrap">
    <div class="grid ${cols} bg-[#f1f1f1] text-[#858585]">${heads.map((h, i) => cell(h, i)).join('')}</div>
    ${rows.map((r, n) => `<div class="grid ${cols} ${n % 2 ? 'bg-white' : 'bg-[#fafafa]'}">${r.map((c, i) => cell(c, i, link)).join('')}</div>`).join('')}
  </div></section>`;
const split = s => s.split('\n').map(l => l.split('|').map(c => c.trim()));

const a = split(`2020-09-27<br>03:38:49.826130+00:00|GEB TPA|221|219|2|4
2020-09-27<br>03:37:39.497913+00:00|GEB TPA|228|217|11|4
2020-09-27<br>03:33:37.028380+00:00|GEB TPA|228|217|11|4
2020-09-27<br>02:40:15.108149+00:00|GOCO|222|216|6|4
2020-09-27<br>02:38:54.300276+00:00|GOCO|217|215|2|4
2020-09-27<br>02:36:22.444638+00:00|GOCO|214|213|1|4
2020-09-27<br>02:19:44.260663+00:00|GOCO|213|210|3|4
2020-09-27<br>02:19:26.831857+00:00|GOCO|211|208|3|4
2020-09-25<br>13:11:32.645993+00:00|GEB TPA|207|206|1|4
2020-09-25<br>03:36:49.291872+00:00|GEB TPA|203|202|1|4`);
const b = split(`2020-09-27<br>21:19:23.907000+00:00|Apple|132|128|4|6|0:
2020-09-27<br>20:57:50.160520+00:00|Google|26|21|5|6|0:
2020-09-27<br>20:55:46.197745+00:00|Google|25|17|8|6|0:
2020-09-27<br>20:49:47.491152+00:00|Google|27|16|11|6|0:
2020-09-27<br>20:44:38.181919+00:00|Google|18|15|3|6|0:
2020-09-27<br>17:21:11.306839+00:00|Google|12|10|2|6|0:
2020-09-27<br>16:58:40.187805+00:00|Google|7|5|2|6|0:
2020-09-27<br>16:30:29.996369+00:00|Google|32|0|32|6|0:
2020-09-24<br>16:32:01.122577+00:00||7|5|2|6|0:
2020-09-24<br>16:30:54.559432+00:00||14|0|14|6|0:`);
const small = 'w-[1034px] grid-cols-[634px_122px_134px_144px]';

document.getElementById('left').innerHTML =
  card('EMPLOYER BULK FEED ANALYSIS BY TRANSMISSION', 'grid-cols-[296px_174px_140px_142px_152px_132px]',
    ['Run date', 'Transmission', 'Total<br>employers<br>till date', 'Processed<br>clean', 'Number of<br>error<br>occurences', 'Volume<br>processed<br>in this run'], a, true) +
  card('TRANSMISSION BULK FEED ANALYSIS', small, ['Run date', 'Total', 'Clean', 'Error'],
    split(`2020-09-27 00:40:14.721848+00:00|122|120|2
2020-09-27 00:38:58.967146+00:00|119|118|1
2020-09-27 00:38:03.992869+00:00|116|116|0`), false);
document.getElementById('right').innerHTML =
  card('EMPLOYEE BULK FEED ANALYSIS BY EMPLOYER', 'grid-cols-[296px_128px_144px_142px_152px_140px_34px]',
    ['Run date', 'Employer', 'Total<br>employees<br>till date', 'Processed<br>clean', 'Number of<br>error<br>occurences', 'Volume<br>processed<br>in this run', 'Ex<br>fo'], b, true) +
  card('PRODUCT BULK FEED ANALYSIS', small, ['Run date', 'Total', 'Clean', 'Error'],
    split(`2020-09-24 02:05:36.935587+00:00|38|36|2
2020-09-01 14:03:06.526845+00:00|37|35|2`), true) +
  `<section class="border-2 border-[#e0e0e0] rounded-[8px] h-[80px] bg-linear-to-b from-[#f6f6f6] to-[#e9e9e9]"></section>`;
</script>
</body>
</html>
